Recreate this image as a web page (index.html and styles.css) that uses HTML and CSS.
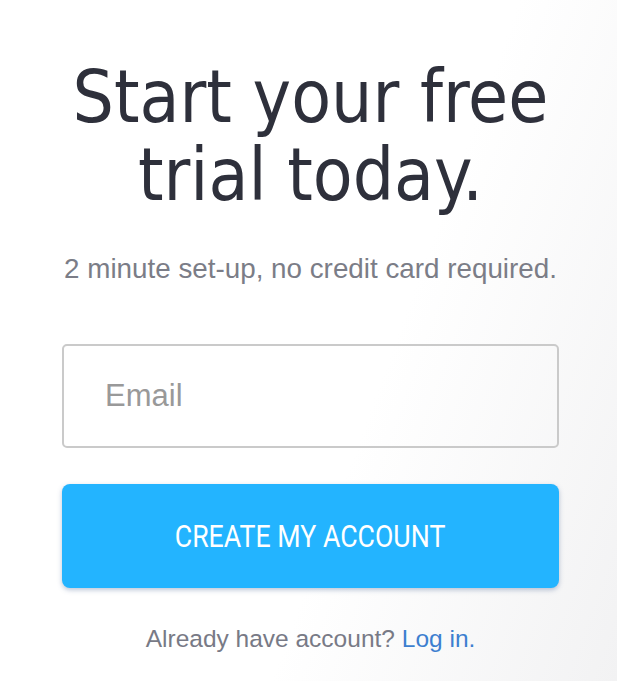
FILE: index.html
```html
<!DOCTYPE html>
<html lang="en">
<head>
    <meta charset="UTF-8">
    <meta name="viewport" content="width=device-width, initial-scale=1.0">
    <title>Free Trial</title>
    <link rel="stylesheet" href="styles.css">
</head>
<body>
    <div class="signup">
        <h1>Start your free trial today.</h1>
        <p class="subtitle">2 minute set-up, no credit card required.</p>

        <form class="signup-form">
            <input class="email" type="email" placeholder="Email">
            <button class="create" type="button"><span>CREATE MY ACCOUNT</span></button>
        </form>

        <p class="login">Already have account? <a href="#">Log in.</a></p>
    </div>
</body>
</html>
```

FILE: styles.css
```css
html, body {
    height: 100%;
}
body {
    margin: 0;
    background: linear-gradient(110deg, #ffffff 60%, #f2f2f3 100%);
    font-family: "Liberation Sans", Arial, sans-serif;
    text-align: center;
}
.signup {
    width: 497px;
    margin: 0 0 0 62px;
    padding-top: 58px;
}
h1 {
    margin: 0;
    font-family: "DejaVu Sans Condensed", "DejaVu Sans", sans-serif;
    font-weight: normal;
    font-size: 72.5px;
    line-height: 78px;
    color: #2e303b;
}
.subtitle {
    margin: 39px -10px 0;
    font-size: 27.8px;
    line-height: 32px;
    white-space: nowrap;
    color: #7b7d87;
}
.signup-form {
    margin-top: 59px;
}
.email {
    display: block;
    box-sizing: border-box;
    width: 100%;
    height: 104px;
    padding: 0 41px;
    border: 2px solid #cacaca;
    border-radius: 5px;
    background: transparent;
    font-family: "Liberation Sans", Arial, sans-serif;
    font-size: 31px;
    color: #333;
}
.email::placeholder {
    color: #999;
}
.create {
    display: block;
    width: 100%;
    height: 104px;
    margin-top: 36px;
    border: none;
    border-radius: 8px;
    background: #23b4ff;
    box-shadow: 0 2px 5px rgba(60, 90, 140, 0.35);
    color: #fff;
    font-family: Roboto, sans-serif;
    font-size: 32px;
    cursor: pointer;
}
.create span {
    display: inline-block;
    transform: scaleX(0.835);
}
.login {
    margin: 37px 0 0;
    font-size: 24.5px;
    line-height: 28px;
    color: #787a86;
}
.login a {
    color: #3d7fd0;
    text-decoration: none;
}
```
